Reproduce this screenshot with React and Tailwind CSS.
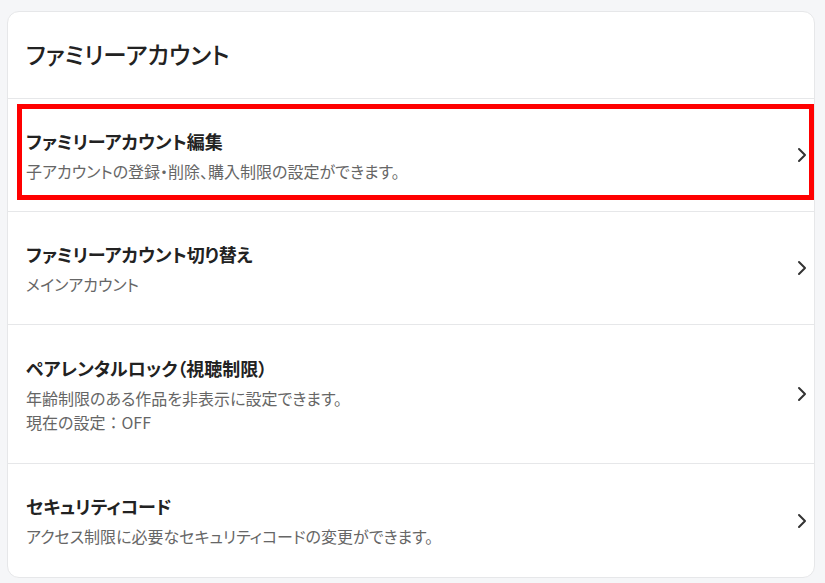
import { ChevronRight } from "lucide-react";

const items = [
  {
    title: "ファミリーアカウント編集",
    lines: ["子アカウントの登録・削除、購入制限の設定ができます。"],
    highlight: true,
  },
  { title: "ファミリーアカウント切り替え", lines: ["メインアカウント"] },
  {
    title: "ペアレンタルロック（視聴制限）",
    lines: [
      "年齢制限のある作品を非表示に設定できます。",
      <>
        現在の設定<span className="[font-feature-settings:normal]">：</span>OFF
      </>,
    ],
  },
  {
    title: "セキュリティコード",
    lines: ["アクセス制限に必要なセキュリティコードの変更ができます。"],
  },
];

const App = () => {
  return (
    <div
      className="min-h-[583px] bg-[#f5f6f8] pl-[7px] pr-[10px] pt-[11px] pb-[6px] [font-feature-settings:'palt']"
      style={{ fontFamily: '"Noto Sans CJK JP", "Noto Sans", sans-serif' }}
    >
      <div className="bg-white rounded-xl border border-[#e6e7e9] overflow-hidden">
        <div className="h-[87px] flex items-center px-[18px] border-b border-[#e6e7e9]">
          <h2 className="text-[23.5px] font-medium text-[#222]">ファミリーアカウント</h2>
        </div>

        {items.map((item, idx) => (
          <div
            key={idx}
            className={`relative flex items-center justify-between pl-[18px] ${
              idx < items.length - 1 ? "border-b border-[#e6e7e9]" : ""
            } ${item.lines.length > 1 ? "h-[139px]" : "h-[113px]"}`}
          >
            {/* Annotation box */}
            {item.highlight && (
              <div className="absolute left-[9px] top-[5px] right-0 bottom-[11px] border-[5px] border-[#f00]"></div>
            )}
            <div>
              <h3 className="text-[18px] font-bold text-[#222] leading-[26px] mb-[5px]">
                {item.title}
              </h3>
              {item.lines.map((line, i) => (
                <p key={i} className="text-[16px] text-[#666] leading-[24px]">
                  {line}
                </p>
              ))}
            </div>
            <ChevronRight size={24} strokeWidth={2} className="text-[#333]" />
          </div>
        ))}
      </div>
    </div>
  );
};

export default App;
